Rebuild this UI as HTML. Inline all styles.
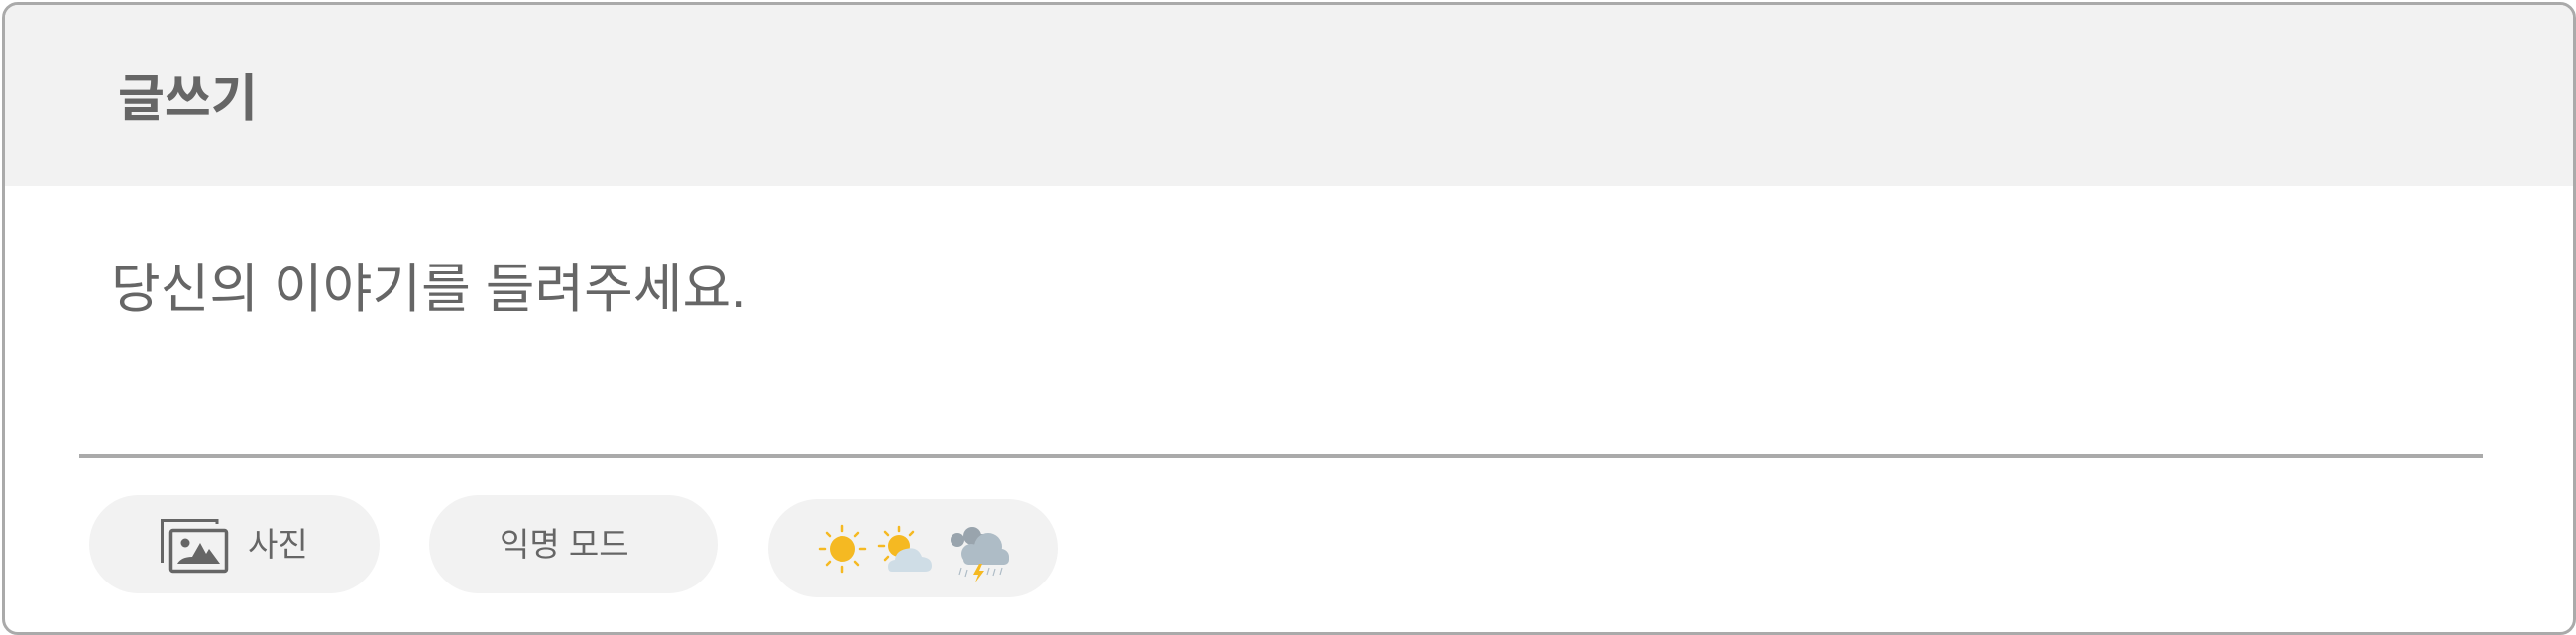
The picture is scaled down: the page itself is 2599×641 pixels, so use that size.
<!DOCTYPE html>
<html><head><meta charset="utf-8"><style>
html,body{margin:0;padding:0;background:#fff;}
body{width:2599px;height:641px;position:relative;overflow:hidden;font-family:"Liberation Sans","Noto Sans CJK KR",sans-serif;color:#666;}
.card{position:absolute;left:2px;top:2px;width:2591px;height:633px;border:3px solid #aaa;border-radius:16px;overflow:hidden;background:#fff;}
.hdr{position:absolute;left:0;top:0;width:100%;height:183px;background:#f2f2f2;}
.t{position:absolute;white-space:nowrap;line-height:1;}
.pill{position:absolute;background:#f2f2f2;border-radius:50px;height:99px;}
.div{position:absolute;left:80px;top:458px;width:2425px;height:4px;background:#aaa;}
</style></head><body>
<div class="card"><div class="hdr"></div></div>
<div class="t" style="left:119px;top:74px;font-size:51px;font-weight:bold;">글쓰기</div>
<div class="t" style="left:112px;top:265px;font-size:54px;">당신의 이야기를 들려주세요.</div>
<div class="div"></div>
<div class="pill" style="left:90px;top:500px;width:293px;"></div>
<div class="pill" style="left:433px;top:500px;width:291px;"></div>
<div class="pill" style="left:775px;top:504px;width:292px;"></div>
<svg style="position:absolute;left:150px;top:515px" width="90" height="70" viewBox="0 0 90 70">
<path d="M13.5 53 V10.5 H69 V14" fill="none" stroke="#666" stroke-width="3"/>
<rect x="22.5" y="20.5" width="56" height="41" rx="2" fill="none" stroke="#666" stroke-width="3.5"/>
<circle cx="37" cy="33" r="4.5" fill="#666"/>
<path d="M29 54 Q33 47 44 47 L52 33 L58 44 L61 39 L72 54 Z" fill="#666"/>
</svg>
<div class="t" style="left:250px;top:533px;font-size:33px;">사진</div>
<div class="t" style="left:504px;top:533px;font-size:33px;">익명 모드</div>
<svg style="position:absolute;left:820px;top:525px" width="210" height="65" viewBox="820 525 210 65">
<g stroke="#f5b922" stroke-width="2.5" stroke-linecap="round">
<line x1="850" y1="531" x2="850" y2="536"/><line x1="850" y1="572" x2="850" y2="577"/>
<line x1="827" y1="554" x2="832" y2="554"/><line x1="868" y1="554" x2="873" y2="554"/>
<line x1="834" y1="538" x2="837" y2="541"/><line x1="863" y1="567" x2="866" y2="570"/>
<line x1="866" y1="538" x2="863" y2="541"/><line x1="837" y1="567" x2="834" y2="570"/>
<line x1="907" y1="532" x2="907" y2="536"/><line x1="887" y1="551" x2="892" y2="551"/>
<line x1="893" y1="537" x2="896" y2="540"/><line x1="921" y1="537" x2="918" y2="540"/>
<line x1="896" y1="562" x2="893" y2="565"/>
</g>
<circle cx="850" cy="554" r="13" fill="#f5b922"/>
<circle cx="907" cy="551" r="11" fill="#f5b922"/>
<path d="M900 577 Q896 577 896 572 Q896 566 903 565 Q904 556 914 554 Q926 551 930 562 Q940 563 940 571 Q940 577 933 577 Z" fill="#cfdde6"/>
<g fill="#99a4ad"><circle cx="966" cy="545" r="7"/><circle cx="981" cy="541" r="9"/><circle cx="991" cy="545" r="6"/></g>
<g fill="#aebcc6"><circle cx="980" cy="559" r="10"/><circle cx="997" cy="552" r="14"/><circle cx="1010" cy="562" r="8"/><rect x="972" y="558" width="46" height="12" rx="5"/></g>
<path d="M988 569 L982 580 L987 580 L984 588 L993 576 L988 576 L991 569 Z" fill="#f5b922"/>
<g stroke="#aebcc6" stroke-width="1.2"><line x1="970" y1="573" x2="968" y2="580"/><line x1="976" y1="575" x2="974" y2="582"/><line x1="998" y1="573" x2="996" y2="580"/><line x1="1004" y1="574" x2="1002" y2="581"/><line x1="1011" y1="573" x2="1009" y2="580"/></g>
</svg>
</body></html>
